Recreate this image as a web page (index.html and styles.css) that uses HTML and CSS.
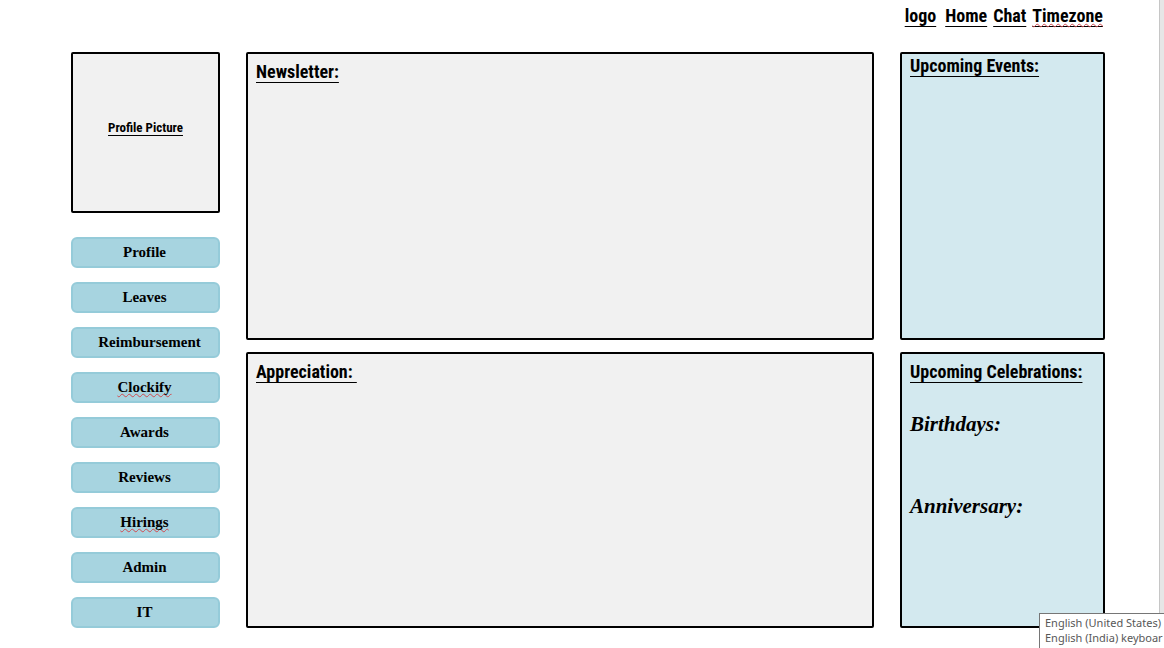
FILE: index.html
```html
<!DOCTYPE html>
<html lang="en">
<head>
<meta charset="utf-8">
<meta name="viewport" content="width=device-width, initial-scale=1">
<title>Employee portal</title>
<link rel="stylesheet" href="styles.css">
</head>
<body>
<div class="page">
  <header class="topbar">
    <nav class="nav" aria-label="Main">
      <a class="nav-link nav-logo" href="#">logo</a>
      <a class="nav-link" href="#">Home</a>
      <a class="nav-link" href="#">Chat</a>
      <a class="nav-link" href="#"><span class="misspelt">Timezone</span></a>
    </nav>
  </header>
  <main class="layout">
    <aside class="sidebar">
      <div class="picture">Profile Picture</div>
      <div class="menu">
        <button class="menu-item" type="button">Profile</button>
        <button class="menu-item" type="button">Leaves</button>
        <button class="menu-item menu-item-wide" type="button">Reimbursement</button>
        <button class="menu-item" type="button"><span class="misspelt">Clockify</span></button>
        <button class="menu-item" type="button">Awards</button>
        <button class="menu-item" type="button">Reviews</button>
        <button class="menu-item" type="button"><span class="misspelt">Hirings</span></button>
        <button class="menu-item" type="button">Admin</button>
        <button class="menu-item" type="button">IT</button>
      </div>
    </aside>
    <div class="column">
      <section class="panel"><h2 class="title">Newsletter:</h2></section>
      <section class="panel"><h2 class="title">Appreciation:&nbsp;</h2></section>
    </div>
    <div class="column">
      <section class="panel panel-blue panel-tight"><h2 class="title">Upcoming Events:</h2></section>
      <section class="panel panel-blue">
        <h2 class="title">Upcoming Celebrations:</h2>
        <h3 class="subtitle">Birthdays:</h3>
        <h3 class="subtitle">Anniversary:</h3>
      </section>
    </div>
  </main>
</div>
<div class="edge"></div>
<div class="tooltip" role="tooltip">English (United States)<br>English (India) keyboar</div>
</body>
</html>
```
FILE: styles.css
```css
* {
  box-sizing: border-box;
}

body {
  margin: 0;
  min-height: 100vh;
  display: flex;
  overflow: hidden;
  background: #fff;
  color: #000;
  font-family: "Agency FB", "Roboto Condensed", Roboto, "Liberation Sans", sans-serif;
}

.page {
  flex: 1;
  display: flex;
  flex-direction: column;
  padding: 0 54px 20px 71px;
}

.edge {
  width: 5px;
  background: #e6e6e6;
  border-left: 1px solid #c6c6c6;
}

.topbar {
  height: 52px;
  padding: 4px 2px 0 0;
}

.nav {
  display: flex;
  justify-content: flex-end;
  gap: 6px;
}

.nav-link {
  color: #000;
  font-size: 18px;
  font-weight: bold;
  line-height: 24px;
  text-decoration: underline 1px;
  text-underline-offset: 4px;
  text-decoration-skip-ink: none;
}

.nav-logo {
  margin-right: 3px;
}

.misspelt {
  text-decoration: underline wavy #d04a50 1px;
  text-underline-offset: 1px;
  text-decoration-skip-ink: none;
}

.layout {
  flex: 1;
  display: grid;
  grid-template-columns: 149px 1fr 205px;
  column-gap: 26px;
}

.sidebar {
  display: flex;
  flex-direction: column;
  gap: 24px;
}

.picture {
  height: 161px;
  display: flex;
  align-items: center;
  justify-content: center;
  padding-bottom: 10px;
  border: 2px solid #000;
  border-radius: 2px;
  background: #f1f1f1;
  font-size: 13px;
  font-weight: bold;
  text-decoration: underline 1px;
  text-underline-offset: 3px;
}

.menu {
  flex: 1;
  display: flex;
  flex-direction: column;
  justify-content: space-between;
  gap: 8px;
}

.menu-item {
  height: 31px;
  padding: 0 2px 0 0;
  border: 2px solid #95cbd9;
  border-radius: 6px;
  background: #a7d4e0;
  color: #000;
  font-family: "Baskerville Old Face", "Liberation Serif", serif;
  font-size: 15px;
  font-weight: bold;
}

.menu-item-wide {
  padding: 0 0 0 8px;
}

.column {
  display: grid;
  grid-template-rows: 288fr 276fr;
  row-gap: 12px;
}

.panel {
  padding: 6px 8px;
  border: 2px solid #000;
  border-radius: 2px;
  background: #f1f1f1;
}

.panel-blue {
  background: #d3e9ef;
}

.panel-tight {
  padding-top: 0;
}

.title {
  margin: 0;
  font-size: 18px;
  font-weight: bold;
  line-height: 24px;
  white-space: nowrap;
  text-decoration: underline 1px;
  text-underline-offset: 4px;
  text-decoration-skip-ink: none;
}

.subtitle {
  margin: 26px 0 54px;
  font-family: "Palace Script MT", "Liberation Serif", serif;
  font-size: 21px;
  font-style: italic;
  font-weight: bold;
  line-height: 28px;
}

.subtitle + .subtitle {
  margin-bottom: 0;
}

.tooltip {
  position: absolute;
  right: 0;
  bottom: 0;
  width: 125px;
  padding: 1px 0 3px 5px;
  overflow: hidden;
  border: solid #767676;
  border-width: 1px 0 0 1px;
  background: #fff;
  color: #575757;
  font-family: "Segoe UI", "Noto Sans", sans-serif;
  font-size: 11px;
  line-height: 15px;
  white-space: nowrap;
}
```
